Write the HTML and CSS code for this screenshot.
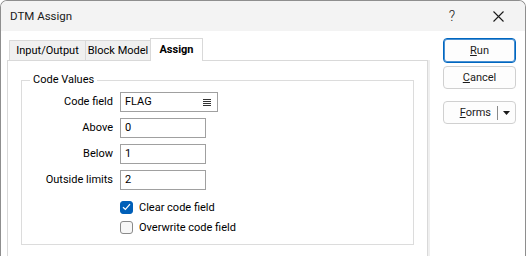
FILE: index.html
```html
<!DOCTYPE html>
<html lang="en">
<head>
    <meta charset="UTF-8">
    <meta name="viewport" content="width=device-width, initial-scale=1.0">
    <title>DTM Assign</title>
    <link rel="stylesheet" href="styles.css">
</head>
<body>
    <div class="window">
        <div class="titlebar">
            <span class="title">DTM Assign</span>
            <span class="caption-btn help">?</span>
            <span class="caption-btn close">
                <svg width="11" height="11" viewBox="0 0 11 11">
                    <path d="M0.5 0.5 L10.5 10.5 M10.5 0.5 L0.5 10.5" stroke="#1a1a1a" stroke-width="1.1" fill="none"/>
                </svg>
            </span>
        </div>

        <div class="dialog">
            <div class="tabs-area">
                <div class="tab-strip">
                    <div class="tab tab-io">Input/Output</div>
                    <div class="tab tab-block">Block Model</div>
                    <div class="tab tab-assign active">Assign</div>
                </div>

                <div class="tab-panel">
                    <fieldset class="group">
                        <legend>Code Values</legend>

                        <div class="fields">
                            <label>Code field</label>
                            <div class="input wide">
                                <span>FLAG</span>
                                <svg class="list-icon" width="8" height="7" viewBox="0 0 8 7">
                                    <path d="M0 0.5 H8 M0 2.5 H8 M0 4.5 H8 M0 6.5 H8" stroke="#333" stroke-width="1"/>
                                </svg>
                            </div>

                            <label>Above</label>
                            <div class="input">0</div>

                            <label>Below</label>
                            <div class="input">1</div>

                            <label>Outside limits</label>
                            <div class="input">2</div>
                        </div>

                        <div class="checks">
                            <div class="check">
                                <span class="box checked">
                                    <svg width="9" height="8" viewBox="0 0 9 8">
                                        <path d="M1 4.2 L3.4 6.5 L8 1.2" stroke="#fff" stroke-width="1.2" fill="none"/>
                                    </svg>
                                </span>
                                Clear code field
                            </div>
                            <div class="check">
                                <span class="box"></span>
                                Overwrite code field
                            </div>
                        </div>
                    </fieldset>
                </div>
            </div>

            <div class="actions">
                <button class="btn focused"><u>R</u>un</button>
                <button class="btn"><u>C</u>ancel</button>
                <button class="btn split">
                    <span class="split-label"><u>F</u>orms</span>
                    <span class="split-sep"></span>
                    <span class="split-arrow">
                        <svg width="7" height="4" viewBox="0 0 7 4">
                            <path d="M0 0 H7 L3.5 4 Z" fill="#1a1a1a"/>
                        </svg>
                    </span>
                </button>
            </div>
        </div>
    </div>
</body>
</html>
```

FILE: styles.css
```css
body {
    margin: 0;
    padding: 0;
    width: 526px;
    height: 256px;
    overflow: hidden;
    background: #ffffff;
    font-family: 'Roboto', 'Noto Sans', sans-serif;
    font-size: 11px;
    color: #000000;
}

.window {
    box-sizing: border-box;
    width: 526px;
    height: 256px;
    border: 1px solid #8e8e8e;
    border-bottom: none;
    border-radius: 7px 7px 0 0;
    overflow: hidden;
    display: flex;
    flex-direction: column;
    background: #ffffff;
}

/* title bar */

.titlebar {
    height: 30px;
    flex: none;
    display: flex;
    align-items: center;
    padding: 0 7px 0 9px;
    background: #f3f3f3;
    color: #1a1a1a;
    font-size: 11.5px;
}

.title {
    flex: 1;
}

.caption-btn {
    width: 40px;
    display: flex;
    justify-content: center;
    align-items: center;
    font-size: 14px;
    font-weight: 300;
}

.help {
    margin-right: 6px;
}

/* dialog body */

.dialog {
    flex: 1;
    display: flex;
    min-height: 0;
}

.tabs-area {
    width: 421px;
    margin-left: 6px;
    padding-top: 7px;
    display: flex;
    flex-direction: column;
}

.tab-strip {
    height: 22px;
    display: flex;
    align-items: flex-end;
    padding-left: 2px;
    position: relative;
    z-index: 1;
}

.tab {
    box-sizing: border-box;
    height: 20px;
    line-height: 20px;
    text-align: center;
    white-space: nowrap;
    border: 1px solid #d9d9d9;
    border-bottom: none;
    background: #f0f0f0;
}

.tab + .tab {
    margin-left: -1px;
}

.tab-io {
    width: 77px;
}

.tab-block {
    width: 66px;
}

.tab-assign {
    width: 53px;
}

.tab.active {
    height: 23px;
    margin-bottom: -1px;
    line-height: 22px;
    background: #ffffff;
    font-weight: bold;
}

.tab-panel {
    flex: 1;
    border: 1px solid #d9d9d9;
    border-bottom: none;
    box-shadow: 2px 0 0 #efefef;
}

/* group box */

.group {
    margin: 11px 13px 0 13px;
    padding: 4px 0 7px 8px;
    border: 1px solid #dcdcdc;
    min-width: 0;
}

.group legend {
    padding: 0 3px;
    line-height: 16px;
}

.fields {
    display: grid;
    grid-template-columns: 83px auto;
    column-gap: 7px;
    row-gap: 6px;
    align-items: center;
}

.fields label {
    text-align: right;
    line-height: 20px;
    white-space: nowrap;
}

.input {
    box-sizing: border-box;
    width: 86px;
    height: 20px;
    line-height: 18px;
    padding: 0 4px;
    border: 1px solid #a0a0a0;
    display: flex;
    align-items: center;
    justify-content: space-between;
}

.input.wide {
    width: 98px;
}

.list-icon {
    margin-right: 2px;
}

.checks {
    margin: 7px 0 0 90px;
}

.check {
    height: 20px;
    display: flex;
    align-items: center;
    gap: 6px;
}

.box {
    box-sizing: border-box;
    width: 13px;
    height: 13px;
    border: 1px solid #8a8a8a;
    border-radius: 3px;
    background: #f7f7f7;
    display: flex;
    align-items: center;
    justify-content: center;
}

.box.checked {
    border-color: #005fb8;
    background: #005fb8;
}

/* buttons */

.actions {
    flex: 1;
    padding: 7px 0 0 15px;
    display: flex;
    flex-direction: column;
    align-items: flex-start;
}

.btn {
    box-sizing: border-box;
    width: 73px;
    height: 23px;
    padding: 0;
    margin: 0;
    border: 1px solid #d0d0d0;
    border-radius: 4px;
    background: #fdfdfd;
    font-family: inherit;
    font-size: 11px;
    color: #1b1b1b;
}

.btn.focused {
    height: 25px;
    border: 1px solid #0067c0;
    box-shadow: inset 0 0 0 1px #4a90d2;
    margin-bottom: 3px;
}

.split {
    margin-top: 12px;
    display: flex;
    align-items: center;
    justify-content: flex-end;
}

.split-label {
    margin-right: 6px;
}

.split-sep {
    width: 1px;
    height: 14px;
    background: #8a8a8a;
}

.split-arrow {
    width: 17px;
    display: flex;
    justify-content: center;
}
```
